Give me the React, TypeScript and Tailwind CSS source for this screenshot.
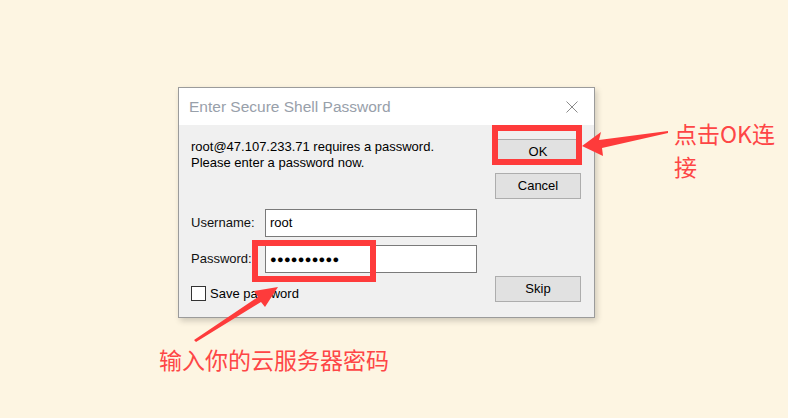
import React from 'react';

// Windows-style SSH password prompt with red annotation overlay
const uiFont = { fontFamily: '"Liberation Sans", Arial, sans-serif' };
const cjkFont = { fontFamily: '"Noto Sans CJK SC", "Noto Sans", sans-serif' };

function DialogButton({ label, className = '' }: { label: string; className?: string }) {
  return (
    <button
      className={`flex h-[26px] w-[86px] items-center justify-center border border-[#adadad] bg-[#e1e1e1] text-[13px] text-black ${className}`}
    >
      {label}
    </button>
  );
}

export default function App() {
  return (
    <div className="relative h-[418px] w-[788px] overflow-hidden bg-[#fdf5e2]" style={uiFont}>
      <div className="pl-[178px] pt-[87px]">
        {/* dialog */}
        <div className="w-[417px] border border-[#9b9b9b] bg-[#f0f0f0] shadow-[2px_3px_6px_rgba(0,0,0,0.18)]">
          <div className="flex h-[37px] items-center justify-between bg-white pl-[10px] pr-[16px]">
            <span className="text-[15.5px] text-[#98a0aa]">Enter Secure Shell Password</span>
            <svg width="12" height="12" viewBox="0 0 12 12" className="mt-[1px]">
              <path d="M0.5 0.5 L11.5 11.5 M11.5 0.5 L0.5 11.5" stroke="#8a8a8a" strokeWidth="1" />
            </svg>
          </div>

          <div className="flex h-[192px] justify-between pl-[12px] pr-[13px]">
            <div className="flex flex-col pt-[14px]">
              <p className="text-[13px] leading-[16px] text-black">
                root@47.107.233.71 requires a password.
                <br />
                Please enter a password now.
              </p>

              <div className="mt-[38px] flex items-center">
                <span className="w-[74px] text-[13px] text-[#111]">Username:</span>
                <div className="flex h-[28px] w-[212px] items-center border border-[#7a7a7a] bg-white pl-[4px] text-[13px] text-black">
                  root
                </div>
              </div>
              <div className="mt-[8px] flex items-center">
                <span className="w-[74px] text-[13px] text-[#111]">Password:</span>
                <div className="flex h-[28px] w-[212px] items-center border border-[#7a7a7a] bg-white pl-[4px] text-[11px] tracking-[0.3px] text-black">
                  ●●●●●●●●●●
                </div>
              </div>
              <div className="mt-[11px] flex items-center gap-[4px]">
                <span className="h-[15px] w-[15px] border border-[#333] bg-white" />
                <span className="text-[13px] text-black">Save password</span>
              </div>
            </div>

            <div className="flex flex-col pb-[15px] pt-[14px]">
              <DialogButton label="OK" />
              <DialogButton label="Cancel" className="mt-[8px]" />
              <DialogButton label="Skip" className="mt-auto" />
            </div>
          </div>
        </div>
      </div>

      {/* annotation boxes */}
      <div className="absolute left-[492px] top-[125px] h-[40px] w-[90px] border-[6px] border-[#fe3b3b]" />
      <div className="absolute left-[252px] top-[240px] h-[42px] w-[124px] border-[6px] border-[#fe3b3b]" />

      {/* annotation arrows */}
      <svg className="pointer-events-none absolute left-0 top-0" width="788" height="418">
        <polygon points="582,146 601,132 599,140 668,131 668,133 602,148 603,156" fill="#fe3b3b" />
        <polygon points="278,287 265,307 261,302 196,342 194,340 258,297 254,291" fill="#fe3b3b" />
      </svg>

      {/* annotation text */}
      <div className="absolute left-[674px] top-[120px] flex flex-col text-[23px] leading-[26px] text-[#fe4646]" style={cjkFont}>
        <span>点击OK连</span>
        <span className="mt-[7px]">接</span>
      </div>
      <div className="absolute left-[159px] top-[344px] text-[23px] leading-[30px] text-[#fe4646]" style={cjkFont}>
        输入你的云服务器密码
      </div>
    </div>
  );
}
